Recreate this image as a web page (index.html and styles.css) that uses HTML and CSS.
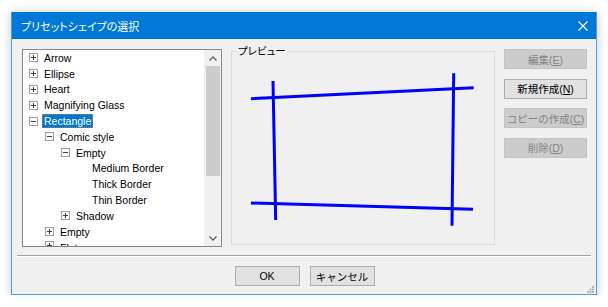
FILE: index.html
```html
<!DOCTYPE html>
<html>
<head>
  <meta charset="utf-8">
  <title>プリセットシェイプの選択</title>
  <!-- Styling -->
  <link rel="stylesheet" href="styles.css">
</head>
<body>
  <div class="window">
    <div class="titlebar">
      <span class="title">プリセットシェイプの選択</span>
      <svg class="close" width="10" height="10" viewBox="0 0 10 10">
        <path d="M0.5 0.5 L9.5 9.5 M9.5 0.5 L0.5 9.5" stroke="#fff" stroke-width="1.1"/>
      </svg>
    </div>

    <div class="content">
      <div class="main">

        <!-- shape tree -->
        <div class="tree">
          <ul class="items">
            <li class="row lv0"><span class="exp plus"></span><span class="label">Arrow</span></li>
            <li class="row lv0"><span class="exp plus"></span><span class="label">Ellipse</span></li>
            <li class="row lv0"><span class="exp plus"></span><span class="label">Heart</span></li>
            <li class="row lv0"><span class="exp plus"></span><span class="label">Magnifying Glass</span></li>
            <li class="row lv0"><span class="exp minus"></span><span class="label selected">Rectangle</span></li>
            <li class="row lv1"><span class="exp minus"></span><span class="label">Comic style</span></li>
            <li class="row lv2"><span class="exp minus"></span><span class="label">Empty</span></li>
            <li class="row lv3"><span class="exp none"></span><span class="label">Medium Border</span></li>
            <li class="row lv3"><span class="exp none"></span><span class="label">Thick Border</span></li>
            <li class="row lv3"><span class="exp none"></span><span class="label">Thin Border</span></li>
            <li class="row lv2"><span class="exp plus"></span><span class="label">Shadow</span></li>
            <li class="row lv1"><span class="exp plus"></span><span class="label">Empty</span></li>
            <li class="row lv1 last"><span class="exp plus"></span><span class="label">Flat</span></li>
          </ul>
          <div class="vscroll">
            <span class="arrow">
              <svg width="8" height="5" viewBox="0 0 8 5"><path d="M0.5 4.5 L4 1 L7.5 4.5" fill="none" stroke="#606060" stroke-width="1.3"/></svg>
            </span>
            <div class="track"><div class="thumb"></div></div>
            <span class="arrow">
              <svg width="8" height="5" viewBox="0 0 8 5"><path d="M0.5 0.5 L4 4 L7.5 0.5" fill="none" stroke="#606060" stroke-width="1.3"/></svg>
            </span>
          </div>
        </div>

        <!-- preview group -->
        <div class="preview">
          <span class="legend">プレビュー</span>
          <svg class="canvas" width="262" height="192" viewBox="0 0 262 192">
            <g stroke="#0000ff" stroke-width="3" stroke-linecap="butt">
              <line x1="19" y1="46.7" x2="241.7" y2="35.7"/>
              <line x1="19" y1="151" x2="241" y2="157.3"/>
              <line x1="41" y1="29" x2="43.7" y2="168"/>
              <line x1="221.7" y1="21.3" x2="220" y2="173.7"/>
            </g>
          </svg>
        </div>

        <!-- actions -->
        <div class="actions">
          <button type="button" class="btn" disabled>編集(<u>E</u>)</button>
          <button type="button" class="btn">新規作成(<u>N</u>)</button>
          <button type="button" class="btn" disabled>コピーの作成(<u>C</u>)</button>
          <button type="button" class="btn" disabled>削除(<u>D</u>)</button>
        </div>
      </div>

      <div class="separator"></div>

      <div class="footer">
        <button type="button" class="btn wide">OK</button>
        <button type="button" class="btn wide">キャンセル</button>
      </div>
    </div>

    <svg class="grip" width="7" height="7" viewBox="0 0 7 7">
      <g fill="#b4b4b4">
        <rect x="5" y="0" width="2" height="2"/>
        <rect x="2.5" y="2.5" width="2" height="2"/>
        <rect x="5" y="2.5" width="2" height="2"/>
        <rect x="0" y="5" width="2" height="2"/>
        <rect x="2.5" y="5" width="2" height="2"/>
        <rect x="5" y="5" width="2" height="2"/>
      </g>
    </svg>
  </div>
</body>
</html>
```

FILE: styles.css
```css
body {
    margin: 0;
    padding: 12px 0 0 11px;
    background-color: #ffffff;
    font-family: "Liberation Sans", "Noto Sans CJK JP", sans-serif;
    font-feature-settings: "palt";
  }

  .window {
    position: relative;
    width: 586px;
    height: 283px;
    box-sizing: border-box;
    border: 1px solid #4c9ee3;
    border-top-color: #0078d7;
    background-color: #f0f0f0;
    box-shadow: 0 1px 10px rgba(0, 0, 0, 0.22);
    display: flex;
    flex-direction: column;
  }

  .titlebar {
    height: 26px;
    background-color: #0078d7;
    display: flex;
    align-items: center;
    justify-content: space-between;
    padding: 0 8px 0 9px;
  }

  .title {
    color: white;
    font-size: 11px;
  }

  .close {
    display: block;
  }

  .content {
    flex: 1;
    display: flex;
    flex-direction: column;
    padding: 10px 9px 0 10px;
  }

  .main {
    display: flex;
    gap: 9px;
    height: 198px;
  }

  /* tree view */
  .tree {
    width: 200px;
    height: 198px;
    box-sizing: border-box;
    border: 1px solid #828790;
    background-color: white;
    display: flex;
  }

  .items {
    flex: 1;
    list-style: none;
    margin: 0;
    padding: 0;
    overflow: hidden;
  }

  .row {
    height: 15.8px;
    display: flex;
    align-items: center;
    gap: 6px;
    font-size: 10.5px;
    color: #000;
    white-space: nowrap;
  }

  .row.last {
    align-items: flex-start;
    padding-top: 1px;
  }

  .lv0 { padding-left: 6px; }
  .lv1 { padding-left: 22px; }
  .lv2 { padding-left: 38px; }
  .lv3 { padding-left: 54px; }

  .exp {
    position: relative;
    flex: none;
    width: 9px;
    height: 9px;
    box-sizing: border-box;
    border: 1px solid #a0a0a0;
  }

  .exp.none {
    border-color: transparent;
  }

  .plus::before,
  .minus::before {
    content: "";
    position: absolute;
    left: 1px;
    top: 3px;
    width: 5px;
    height: 1px;
    background-color: #3c3c3c;
  }

  .plus::after {
    content: "";
    position: absolute;
    left: 3px;
    top: 1px;
    width: 1px;
    height: 5px;
    background-color: #3c3c3c;
  }

  .label {
    line-height: 12px;
    padding: 0 1px;
    margin-left: -2px;
    border: 1px solid transparent;
  }

  .label.selected {
    background-color: #0078d7;
    color: white;
    border: 1px dotted #c07a30;
  }

  .vscroll {
    width: 17px;
    background-color: #f0f0f0;
    display: flex;
    flex-direction: column;
  }

  .arrow {
    height: 16px;
    display: flex;
    align-items: center;
    justify-content: center;
  }

  .track {
    flex: 1;
  }

  .thumb {
    height: 110px;
    margin: 0 1px 0 2px;
    background-color: #cdcdcd;
  }

  /* preview group */
  .preview {
    position: relative;
    width: 264px;
    height: 194px;
    margin-top: 2px;
    box-sizing: border-box;
    border: 1px solid #dcdcdc;
  }

  .legend {
    position: absolute;
    left: 5px;
    top: -8px;
    padding: 0 1px;
    line-height: 14px;
    font-size: 10.5px;
    color: #000;
    background-color: #f0f0f0;
  }

  .canvas {
    display: block;
  }

  /* buttons */
  .actions {
    display: flex;
    flex-direction: column;
    gap: 9.5px;
  }

  .btn {
    width: 83px;
    height: 20px;
    padding: 0;
    box-sizing: border-box;
    border: 1px solid #adadad;
    background-color: #e1e1e1;
    color: #000;
    font-family: inherit;
    font-size: 10.5px;
  }

  .btn:disabled {
    background-color: #cccccc;
    border-color: #c4c4c4;
    color: #838383;
  }

  .btn.wide {
    width: 65px;
  }

  .separator {
    margin: 8px -4px 0 -5px;
    border-top: 1px solid #a0a0a0;
    border-bottom: 1px solid #ffffff;
  }

  .footer {
    display: flex;
    justify-content: center;
    gap: 10px;
    margin-top: 9px;
  }

  .grip {
    position: absolute;
    right: 2px;
    bottom: 1px;
  }
```
